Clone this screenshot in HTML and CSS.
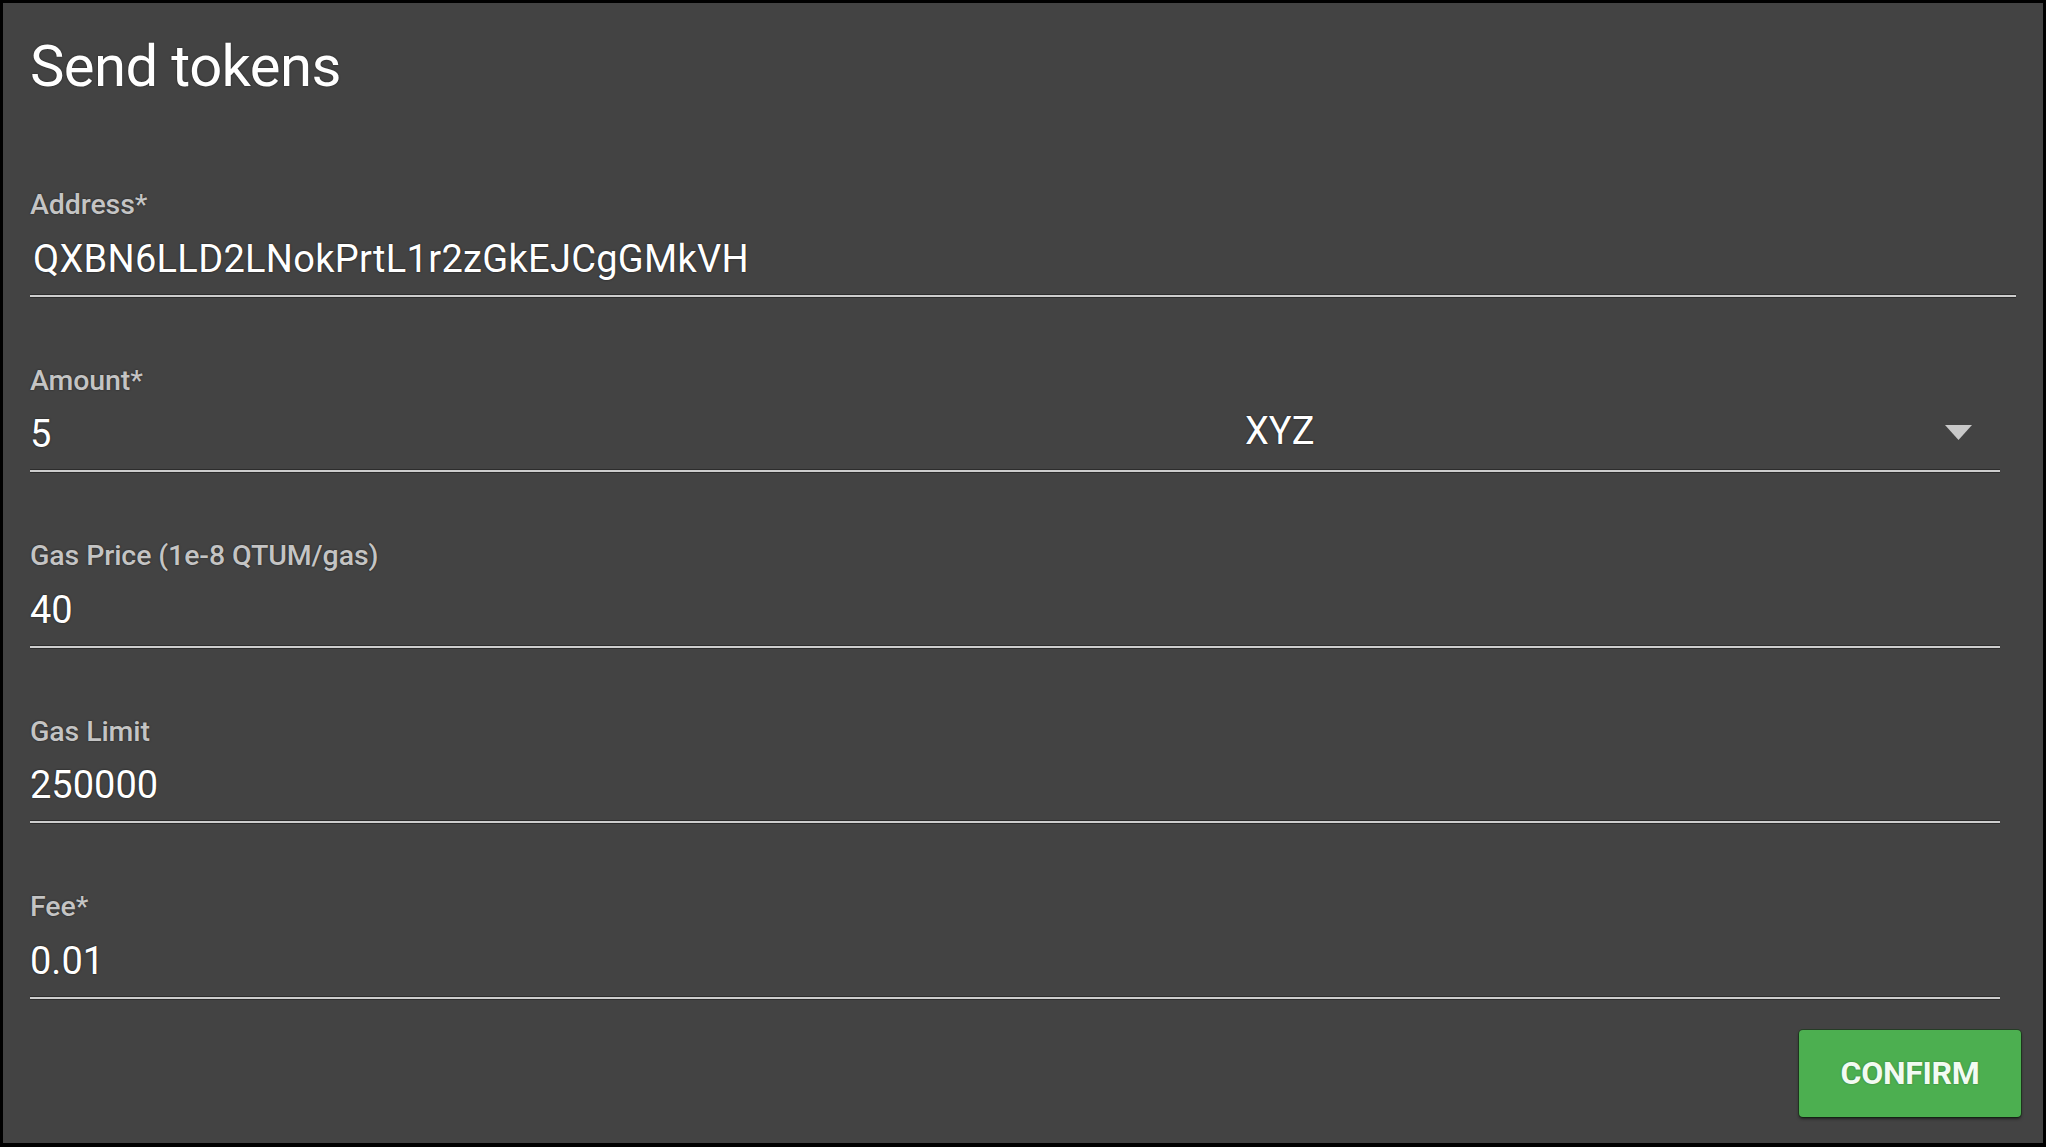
FILE: index.html
```html
<!DOCTYPE html>
<html lang="en">
<head>
<meta charset="utf-8">
<title>Send tokens</title>
<link rel="stylesheet" href="styles.css">
</head>
<body>
<div class="dialog">
  <h1 class="title">Send tokens</h1>
  <form class="form">
    <div class="field field--wide">
      <label class="label">Address*</label>
      <div class="value value--address">QXBN6LLD2LNokPrtL1r2zGkEJCgGMkVH</div>
      <div class="line"></div>
    </div>
    <div class="field">
      <label class="label">Amount*</label>
      <div class="row">
        <div class="value amount">5</div>
        <div class="select">
          <span class="value select-text">XYZ</span>
          <svg class="caret" width="27" height="15" viewBox="0 0 27 15"><polygon points="0,0 27,0 13.5,15" fill="#c9c9c9"/></svg>
        </div>
      </div>
      <div class="line"></div>
    </div>
    <div class="field">
      <label class="label">Gas Price (1e-8 QTUM/gas)</label>
      <div class="value">40</div>
      <div class="line"></div>
    </div>
    <div class="field">
      <label class="label">Gas Limit</label>
      <div class="value">250000</div>
      <div class="line"></div>
    </div>
    <div class="field">
      <label class="label">Fee*</label>
      <div class="value">0.01</div>
      <div class="line"></div>
    </div>
  </form>
  <div class="actions">
    <button class="btn" type="button">CONFIRM</button>
  </div>
</div>
</body>
</html>
```

FILE: styles.css
```css
html, body {
  margin: 0;
  padding: 0;
  background: #000;
}

body {
  font-family: Roboto, "Liberation Sans", Arial, sans-serif;
}

.dialog {
  box-sizing: border-box;
  width: 2040px;
  height: 1140px;
  margin: 3px;
  background: #434343;
  padding: 34px 22px 0 27px;
  display: flex;
  flex-direction: column;
}

.title {
  margin: 0 0 26px 0;
  font-size: 58px;
  line-height: 1;
  font-weight: 400;
  color: #fff;
  letter-spacing: -0.6px;
  text-shadow: 0 0 2px rgba(0, 0, 0, 0.6);
}

.form {
  display: flex;
  flex-direction: column;
}

.field {
  display: flex;
  flex-direction: column;
  padding-top: 69px;
  margin-right: 21px;
}

.field--wide {
  margin-right: 5px;
}

.label {
  display: block;
  font-size: 28.5px;
  line-height: 29px;
  height: 29px;
  font-weight: 500;
  letter-spacing: -0.1px;
  color: #c4c4c4;
  text-shadow: 0 0 2px rgba(0, 0, 0, 0.6);
}

.value {
  margin-top: 20.5px;
  font-size: 38px;
  line-height: 1;
  height: 38px;
  color: #fff;
  text-shadow: 0 0 2px rgba(0, 0, 0, 0.7);
}

.value--address {
  padding-left: 3px;
  letter-spacing: 0.3px;
}

.row {
  display: flex;
  align-items: flex-start;
}

.amount {
  flex: 1;
}

.select {
  width: 755px;
  display: flex;
  align-items: center;
  justify-content: space-between;
  margin-top: 17.5px;
  padding-right: 28px;
  box-sizing: border-box;
}

.select .select-text {
  margin-top: 0;
}

.caret {
  display: block;
  margin-top: 2px;
}

.line {
  margin-top: 17px;
  height: 2px;
  background: #cdcdcd;
  box-shadow: 0 -1px 0 #2c2c2c, 0 1px 0 #2c2c2c;
}

.actions {
  display: flex;
  justify-content: flex-end;
  margin-top: 31px;
}

.btn {
  width: 222px;
  height: 87px;
  border: none;
  border-radius: 4px;
  background: #4caf50;
  color: #f2fbf2;
  font-family: Roboto, "Liberation Sans", Arial, sans-serif;
  font-size: 32px;
  font-weight: 700;
  letter-spacing: -0.3px;
  padding: 0;
  box-shadow: 0 2px 3px rgba(0, 0, 0, 0.5), 0 0 0 1px rgba(20, 60, 20, 0.6);
  text-shadow: 0 0 2px rgba(0, 0, 0, 0.35);
  cursor: pointer;
}
```
